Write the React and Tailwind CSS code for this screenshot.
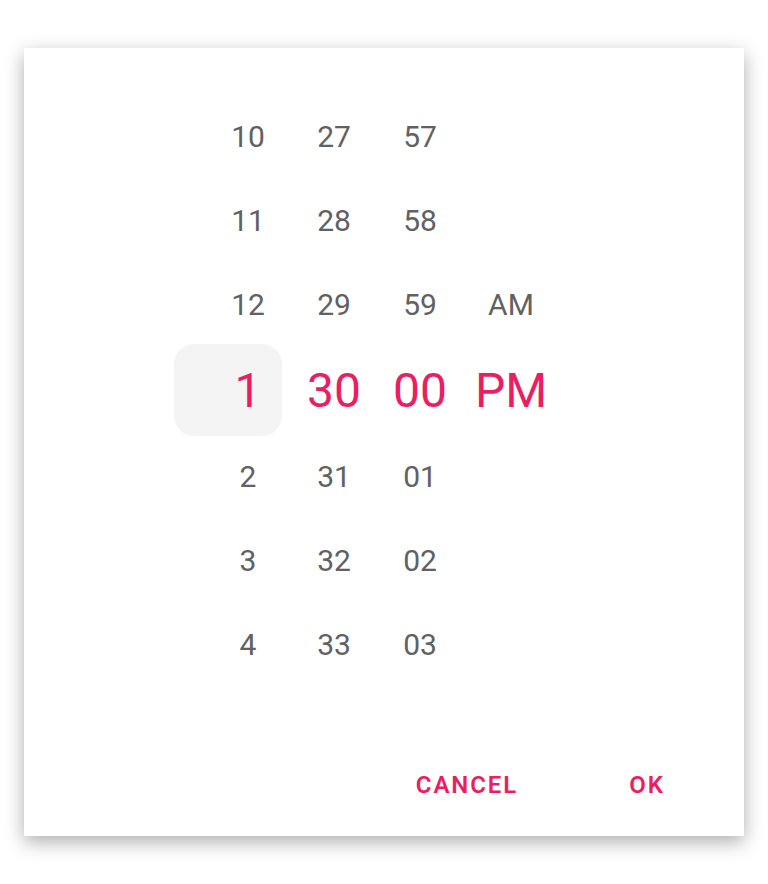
import React from "react";

const hours = ["10", "11", "12", "1", "2", "3", "4"];
const minutes = ["27", "28", "29", "30", "31", "32", "33"];
const seconds = ["57", "58", "59", "00", "01", "02", "03"];
const ampm = ["", "", "AM", "PM", "", "", ""];

function Column({ items, width, highlight }) {
  return (
    <div className="flex flex-col" style={{ width }}>
      {items.map((t, i) => {
        const sel = i === 3;
        return (
          <div
            key={i}
            className={
              "relative flex items-center justify-center " +
              (sel ? "h-[88px] text-[48px] text-[#e91e63]" : "h-[84px] text-[30px] text-[#616161]")
            }
          >
            {sel && highlight && (
              <div className="absolute left-[-31px] top-[-3px] h-[92px] w-[108px] rounded-[20px] bg-[#f4f4f4]" />
            )}
            <span className="relative leading-none">{t}</span>
          </div>
        );
      })}
    </div>
  );
}

export default function App() {
  return (
    <div
      className="min-h-[884px] w-[768px] bg-white pl-6 pt-12"
      style={{ fontFamily: "Roboto, 'Noto Sans', sans-serif" }}
    >
      <div className="flex h-[788px] w-[720px] flex-col bg-white shadow-[0_6px_18px_rgba(0,0,0,0.32)]">
        <div className="flex pl-[181px] pt-[47px]">
          <Column items={hours} width={86} highlight />
          <Column items={minutes} width={86} />
          <Column items={seconds} width={86} />
          <Column items={ampm} width={96} />
        </div>
        <div className="mt-[74px] flex justify-end gap-[55px] pr-[47px]">
          <button className="flex h-12 w-[150px] items-center justify-center text-[24px] font-semibold uppercase tracking-[0.08em] text-[#e91e63]">
            Cancel
          </button>
          <button className="flex h-12 w-[100px] items-center justify-center text-[24px] font-semibold uppercase tracking-[0.08em] text-[#e91e63]">
            OK
          </button>
        </div>
      </div>
    </div>
  );
}
